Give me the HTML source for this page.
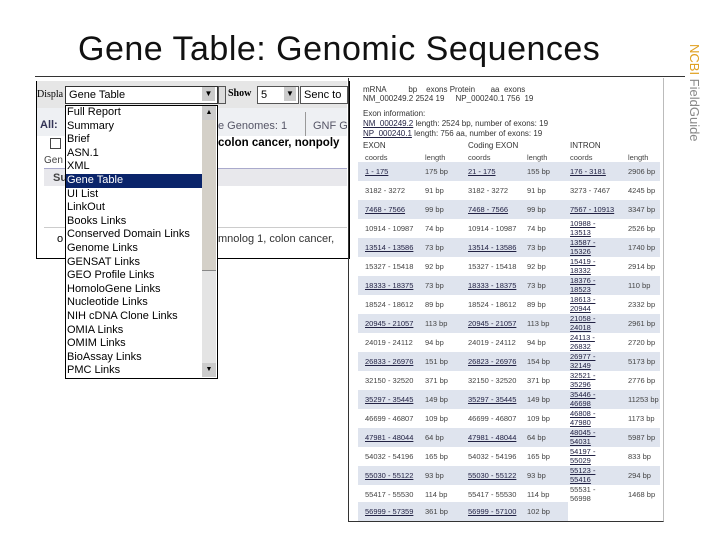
<!DOCTYPE html>
<html><head><meta charset="utf-8"><style>
body{margin:0;width:720px;height:540px;background:#fff;position:relative;overflow:hidden;font-family:"Liberation Sans",sans-serif}
.a{position:absolute}
.t{font-size:34px;left:78px;top:30px;color:#111;letter-spacing:0.5px;white-space:nowrap}
.dd div{height:13.6px;line-height:13.6px;font-size:11px;padding-left:1px;white-space:nowrap;color:#000}
.r{position:absolute;left:358px;width:302px;height:19px;font-size:7.5px;color:#444}
.r span{position:absolute;top:5px;white-space:nowrap}
.r span.w{top:1px;line-height:8.5px}
.s{background:#dfe4ee}
.r span.l{color:#224;text-decoration:underline}
</style></head><body>
<div class="a t">Gene Table: Genomic Sequences</div>
<div class="a" style="left:35px;top:76px;width:650px;height:1px;background:#333"></div>
<div class="a" style="left:687px;top:44px;font-size:13px;writing-mode:vertical-rl;color:#888;white-space:nowrap"><span style="color:#e0a020">NCBI</span> FieldGuide</div>

<div class="a" style="left:36px;top:81px;width:312px;height:177px;border:1px solid #000;border-top:none;background:#fff"></div>
<div class="a" style="left:37px;top:81px;width:310px;height:27px;background:#e6e6e6"></div>
<div class="a" style="left:37px;top:89px;font-size:10px;font-family:'Liberation Serif',serif">Displa</div>
<div class="a" style="left:218px;top:86px;width:6px;height:16px;border:1px solid #555;background:#ddd"></div>
<div class="a" style="left:228px;top:88px;font-size:10px;font-family:'Liberation Serif',serif;font-weight:bold">Show</div>
<div class="a" style="left:257px;top:86px;width:40px;height:16px;border:1px solid #555;background:#fff;font-size:11px;line-height:16px">&nbsp;5</div>
<div class="a" style="left:284px;top:87px;width:12px;height:14px;background:#ccc;font-size:8px;text-align:center;line-height:14px">▼</div>
<div class="a" style="left:300px;top:86px;width:46px;height:16px;border:1px solid #555;background:#fff;font-size:11px;line-height:16px">&nbsp;Senc to</div>
<div class="a" style="left:37px;top:108px;width:310px;height:28px;background:#eef0f3"></div>
<div class="a" style="left:40px;top:119px;font-size:11px;font-weight:bold;color:#335">All:</div>
<div class="a" style="left:218px;top:120px;font-size:11px;color:#556">e Genomes: 1</div>
<div class="a" style="left:305px;top:112px;width:1px;height:24px;background:#999"></div>
<div class="a" style="left:313px;top:120px;font-size:11px;color:#556">GNF G</div>
<div class="a" style="left:50px;top:138px;width:9px;height:9px;border:1px solid #444"></div>
<div class="a" style="left:218px;top:137px;font-size:11.5px;font-weight:bold">colon cancer, nonpoly</div>
<div class="a" style="left:44px;top:155px;font-size:10px;color:#444">Gen</div>
<div class="a" style="left:44px;top:168px;width:303px;height:1px;background:#aac"></div>
<div class="a" style="left:44px;top:169px;width:303px;height:17px;background:#e8e8ec"></div>
<div class="a" style="left:53px;top:172px;font-size:11px;font-weight:bold;color:#444">Su</div>
<div class="a" style="left:44px;top:227px;width:303px;height:1px;background:#ccc"></div>
<div class="a" style="left:57px;top:233px;font-size:11px">o</div>
<div class="a" style="left:218px;top:233px;font-size:11px;color:#333">mnolog 1, colon cancer,</div>

<div class="a" style="left:65px;top:86px;width:151px;height:16px;border:1px solid #333;background:#fff;font-size:11px;line-height:16px">&nbsp;Gene Table</div>
<div class="a" style="left:202px;top:87px;width:13px;height:14px;background:#ccc;font-size:8px;text-align:center;line-height:14px">▼</div>
<div class="a dd" style="left:65px;top:105px;width:151px;height:272px;border:1px solid #000;background:#fff;overflow:hidden">
<div>Full Report</div><div>Summary</div><div>Brief</div><div>ASN.1</div><div>XML</div>
<div style="background:#0a246a;color:#fff;width:136px">Gene Table</div>
<div>UI List</div><div>LinkOut</div><div>Books Links</div><div>Conserved Domain Links</div><div>Genome Links</div><div>GENSAT Links</div><div>GEO Profile Links</div><div>HomoloGene Links</div><div>Nucleotide Links</div><div>NIH cDNA Clone Links</div><div>OMIA Links</div><div>OMIM Links</div><div>BioAssay Links</div><div>PMC Links</div>
</div>
<div class="a" style="left:202px;top:106px;width:14px;height:271px;background:#e4e4e4"></div>
<div class="a" style="left:202px;top:106px;width:14px;height:14px;background:#ccc;font-size:7px;text-align:center;line-height:14px">▲</div>
<div class="a" style="left:202px;top:120px;width:14px;height:150px;background:#d4d0c8;border-bottom:1px solid #888"></div>
<div class="a" style="left:202px;top:363px;width:14px;height:14px;background:#ccc;font-size:7px;text-align:center;line-height:14px">▼</div>

<div class="a" style="left:348px;top:78px;width:314px;height:443px;border-left:1px solid #333;border-bottom:1px solid #333;border-right:1px solid #bbb"></div>
<div class="a" style="left:363px;top:85px;font-size:8px;color:#333;line-height:9px;white-space:pre">mRNA          bp    exons Protein       aa  exons
NM_000249.2 2524 19     NP_000240.1 756  19</div>
<div class="a" style="left:363px;top:109px;font-size:8px;color:#333;line-height:10px">Exon information:<br><u style="color:#224">NM_000249.2</u> length: 2524 bp, number of exons: 19<br><u style="color:#224">NP_000240.1</u> length: 756 aa, number of exons: 19</div>
<div class="a" style="left:363px;top:141px;font-size:8px;color:#333">EXON</div>
<div class="a" style="left:468px;top:141px;font-size:8px;color:#333">Coding EXON</div>
<div class="a" style="left:570px;top:141px;font-size:8px;color:#333">INTRON</div>
<div class="r" style="top:148px"><span style="left:7px">coords</span><span style="left:67px">length</span><span style="left:110px">coords</span><span style="left:169px">length</span><span style="left:212px">coords</span><span style="left:270px">length</span></div>

<div class="r s" style="top:162px"><span class="l" style="left:7px">1 - 175</span><span style="left:67px">175 bp</span><span class="l" style="left:110px">21 - 175</span><span style="left:169px">155 bp</span><span class="l" style="left:212px">176 - 3181</span><span style="left:270px">2906 bp</span></div>
<div class="r" style="top:181px"><span style="left:7px">3182 - 3272</span><span style="left:67px">91 bp</span><span style="left:110px">3182 - 3272</span><span style="left:169px">91 bp</span><span style="left:212px">3273 - 7467</span><span style="left:270px">4245 bp</span></div>
<div class="r s" style="top:200px"><span class="l" style="left:7px">7468 - 7566</span><span style="left:67px">99 bp</span><span class="l" style="left:110px">7468 - 7566</span><span style="left:169px">99 bp</span><span class="l" style="left:212px">7567 - 10913</span><span style="left:270px">3347 bp</span></div>
<div class="r" style="top:219px"><span style="left:7px">10914 - 10987</span><span style="left:67px">74 bp</span><span style="left:110px">10914 - 10987</span><span style="left:169px">74 bp</span><span class="l w" style="left:212px">10988 -<br>13513</span><span style="left:270px">2526 bp</span></div>
<div class="r s" style="top:238px"><span class="l" style="left:7px">13514 - 13586</span><span style="left:67px">73 bp</span><span class="l" style="left:110px">13514 - 13586</span><span style="left:169px">73 bp</span><span class="l w" style="left:212px">13587 -<br>15326</span><span style="left:270px">1740 bp</span></div>
<div class="r" style="top:257px"><span style="left:7px">15327 - 15418</span><span style="left:67px">92 bp</span><span style="left:110px">15327 - 15418</span><span style="left:169px">92 bp</span><span class="l w" style="left:212px">15419 -<br>18332</span><span style="left:270px">2914 bp</span></div>
<div class="r s" style="top:276px"><span class="l" style="left:7px">18333 - 18375</span><span style="left:67px">73 bp</span><span class="l" style="left:110px">18333 - 18375</span><span style="left:169px">73 bp</span><span class="l w" style="left:212px">18376 -<br>18523</span><span style="left:270px">110 bp</span></div>
<div class="r" style="top:295px"><span style="left:7px">18524 - 18612</span><span style="left:67px">89 bp</span><span style="left:110px">18524 - 18612</span><span style="left:169px">89 bp</span><span class="l w" style="left:212px">18613 -<br>20944</span><span style="left:270px">2332 bp</span></div>
<div class="r s" style="top:314px"><span class="l" style="left:7px">20945 - 21057</span><span style="left:67px">113 bp</span><span class="l" style="left:110px">20945 - 21057</span><span style="left:169px">113 bp</span><span class="l w" style="left:212px">21058 -<br>24018</span><span style="left:270px">2961 bp</span></div>
<div class="r" style="top:333px"><span style="left:7px">24019 - 24112</span><span style="left:67px">94 bp</span><span style="left:110px">24019 - 24112</span><span style="left:169px">94 bp</span><span class="l w" style="left:212px">24113 -<br>26832</span><span style="left:270px">2720 bp</span></div>
<div class="r s" style="top:352px"><span class="l" style="left:7px">26833 - 26976</span><span style="left:67px">151 bp</span><span class="l" style="left:110px">26823 - 26976</span><span style="left:169px">154 bp</span><span class="l w" style="left:212px">26977 -<br>32149</span><span style="left:270px">5173 bp</span></div>
<div class="r" style="top:371px"><span style="left:7px">32150 - 32520</span><span style="left:67px">371 bp</span><span style="left:110px">32150 - 32520</span><span style="left:169px">371 bp</span><span class="l w" style="left:212px">32521 -<br>35296</span><span style="left:270px">2776 bp</span></div>
<div class="r s" style="top:390px"><span class="l" style="left:7px">35297 - 35445</span><span style="left:67px">149 bp</span><span class="l" style="left:110px">35297 - 35445</span><span style="left:169px">149 bp</span><span class="l w" style="left:212px">35446 -<br>46698</span><span style="left:270px">11253 bp</span></div>
<div class="r" style="top:409px"><span style="left:7px">46699 - 46807</span><span style="left:67px">109 bp</span><span style="left:110px">46699 - 46807</span><span style="left:169px">109 bp</span><span class="l w" style="left:212px">46808 -<br>47980</span><span style="left:270px">1173 bp</span></div>
<div class="r s" style="top:428px"><span class="l" style="left:7px">47981 - 48044</span><span style="left:67px">64 bp</span><span class="l" style="left:110px">47981 - 48044</span><span style="left:169px">64 bp</span><span class="l w" style="left:212px">48045 -<br>54031</span><span style="left:270px">5987 bp</span></div>
<div class="r" style="top:447px"><span style="left:7px">54032 - 54196</span><span style="left:67px">165 bp</span><span style="left:110px">54032 - 54196</span><span style="left:169px">165 bp</span><span class="l w" style="left:212px">54197 -<br>55029</span><span style="left:270px">833 bp</span></div>
<div class="r s" style="top:466px"><span class="l" style="left:7px">55030 - 55122</span><span style="left:67px">93 bp</span><span class="l" style="left:110px">55030 - 55122</span><span style="left:169px">93 bp</span><span class="l w" style="left:212px">55123 -<br>55416</span><span style="left:270px">294 bp</span></div>
<div class="r" style="top:485px"><span style="left:7px">55417 - 55530</span><span style="left:67px">114 bp</span><span style="left:110px">55417 - 55530</span><span style="left:169px">114 bp</span><span class="w" style="left:212px">55531 -<br>56998</span><span style="left:270px">1468 bp</span></div>
<div class="r s" style="top:502px;width:210px"><span class="l" style="left:7px">56999 - 57359</span><span style="left:67px">361 bp</span><span class="l" style="left:110px">56999 - 57100</span><span style="left:169px">102 bp</span></div>
</body></html>
